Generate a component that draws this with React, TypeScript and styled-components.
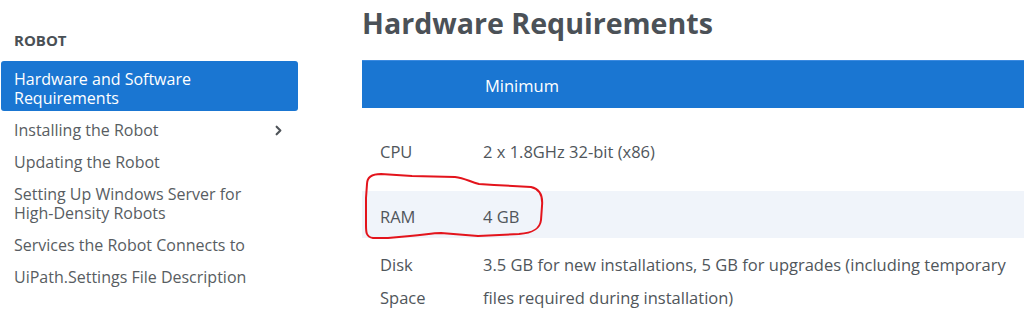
import styled, { createGlobalStyle } from "styled-components";
import { ChevronRight } from "lucide-react";

const GlobalStyle = createGlobalStyle`
  html, body {
    margin: 0;
    padding: 0;
    background: #ffffff;
  }
  body {
    font-family: "Open Sans", "Noto Sans", sans-serif;
    color: #4f555a;
  }
`;

const Page = styled.div`
  position: relative;
  display: flex;
  width: 1024px;
  height: 318px;
  overflow: hidden;
`;

// left navigation
const Sidebar = styled.nav`
  flex: 0 0 298px;
  padding-top: 31px;
  box-sizing: border-box;
`;

const SectionTitle = styled.div`
  font-size: 15px;
  font-weight: 700;
  line-height: 19px;
  color: #4a5055;
  padding-left: 14px;
  margin-bottom: 11px;
`;

const NavList = styled.ul`
  list-style: none;
  margin: 0;
  padding: 0 0 0 1px;
  display: flex;
  flex-direction: column;
  gap: 1px;
`;

const NavItem = styled.li<{ $active?: boolean }>`
  display: flex;
  align-items: flex-start;
  justify-content: space-between;
  padding: 8.5px 13px 3.5px 13px;
  font-size: 16px;
  line-height: 19px;
  border-radius: 3px;
  background: ${({ $active }) => ($active ? "#1a76d2" : "transparent")};
  color: ${({ $active }) => ($active ? "#ffffff" : "#585d62")};
`;

const NavLabel = styled.span`
  max-width: 250px;
`;

const NavChevron = styled.span`
  display: flex;
  align-items: center;
  height: 19px;
  margin-right: -1px;
  color: #4f5459;
`;

// main content
const Main = styled.main`
  flex: 0 0 auto;
  margin-left: 64px;
`;

const Title = styled.h1`
  margin: 5px 0 19px;
  font-size: 28.6px;
  line-height: 36px;
  font-weight: 700;
  color: #4b5157;
`;

const Table = styled.div`
  width: 760px;
  display: flex;
  flex-direction: column;
  font-size: 16.5px;
  line-height: 33px;
`;

const Row = styled.div<{ $head?: boolean; $shaded?: boolean; $pad?: string }>`
  display: grid;
  grid-template-columns: 121px 541px 1fr;
  align-items: start;
  padding: ${({ $pad }) => $pad || "9px 0 5px"};
  background: ${({ $head, $shaded }) =>
    $head ? "#1a76d2" : $shaded ? "#f0f4fa" : "transparent"};
  color: ${({ $head }) => ($head ? "#ffffff" : "#50565b")};
  border-top: ${({ $head }) => ($head ? "1px solid #3b8ae0" : "none")};
`;

const LabelCell = styled.div`
  padding-left: 18px;
  padding-right: 40px;
`;

const ValueCell = styled.div<{ $indent?: number }>`
  padding-left: ${({ $indent }) => $indent || 0}px;
`;

// hand-drawn red mark over the RAM row
const Annotation = styled.svg`
  position: absolute;
  left: 0;
  top: 0;
  pointer-events: none;
`;

const navItems = [
  { label: "Hardware and Software Requirements", active: true },
  { label: "Installing the Robot", chevron: true },
  { label: "Updating the Robot" },
  { label: "Setting Up Windows Server for High-Density Robots" },
  { label: "Services the Robot Connects to" },
  { label: "UiPath.Settings File Description" },
];

export default function App() {
  return (
    <>
      <GlobalStyle />
      <Page>
        <Sidebar>
          <SectionTitle>ROBOT</SectionTitle>
          <NavList>
            {navItems.map((item) => (
              <NavItem key={item.label} $active={item.active}>
                <NavLabel>{item.label}</NavLabel>
                {item.chevron && (
                  <NavChevron>
                    <ChevronRight size={15} strokeWidth={3.4} />
                  </NavChevron>
                )}
              </NavItem>
            ))}
          </NavList>
        </Sidebar>
        <Main>
          <Title>Hardware Requirements</Title>
          <Table>
            <Row $head $pad="8px 0 6px">
              <LabelCell />
              <ValueCell $indent={2}>Minimum</ValueCell>
              <ValueCell />
            </Row>
            <Row $pad="27px 0 23px">
              <LabelCell>CPU</LabelCell>
              <ValueCell>2 x 1.8GHz 32-bit (x86)</ValueCell>
              <ValueCell />
            </Row>
            <Row $shaded>
              <LabelCell>RAM</LabelCell>
              <ValueCell>4 GB</ValueCell>
              <ValueCell />
            </Row>
            <Row $pad="10px 0 5px">
              <LabelCell>Disk Space</LabelCell>
              <ValueCell>
                3.5 GB for new installations, 5 GB for upgrades (including
                temporary files required during installation)
              </ValueCell>
              <ValueCell />
            </Row>
          </Table>
        </Main>
        <Annotation width="1024" height="318" viewBox="0 0 1024 318">
          <path
            d="M367,184 C367,177 372,174 381,174 L412,176 L455,177 C465,178 470,182 479,184 L494,185 L531,187 C540,189 543,196 542,206 L541,220 C540,229 533,233 519,234 L478,236 L441,233 C431,233 425,235 410,236 L388,238 L373,238 C366,237 366,232 366,225 L366,198 Z"
            fill="none"
            stroke="#e3141c"
            strokeWidth="2"
            strokeLinejoin="round"
          />
        </Annotation>
      </Page>
    </>
  );
}
